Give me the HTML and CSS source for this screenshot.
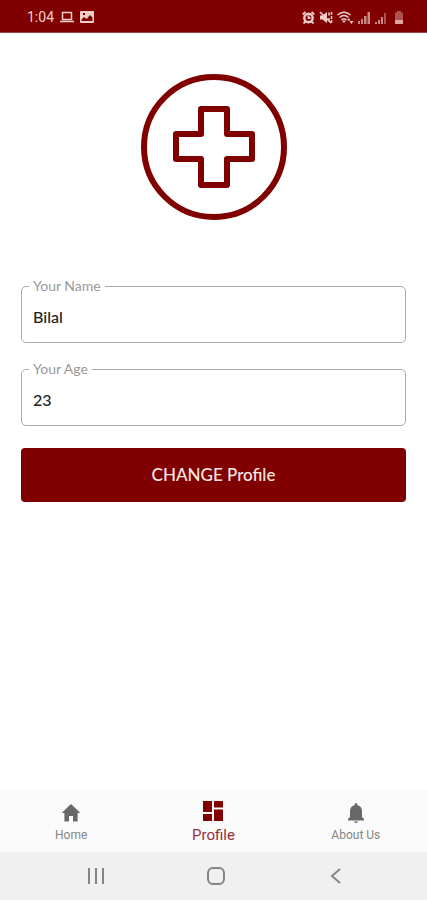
FILE: index.html
```
<!DOCTYPE html>
<html lang="en">
<head>
<meta charset="utf-8">
<meta name="viewport" content="width=device-width, initial-scale=1">
<title>Profile</title>
<link rel="stylesheet" href="styles.css">
</head>
<body>
<header class="status">
  <div class="status-group">
    <span class="clock">1:04</span>
    <svg width="14" height="12" viewBox="0 0 14 12" fill="none" stroke="currentColor"><path d="M2.500 1.500h9v7h-9zM0 10.500h14" stroke-width="1.500"/></svg>
    <svg width="14" height="12" viewBox="0 0 14 12"><path fill="currentColor" fill-rule="evenodd" d="M1 0h12q1 0 1 1v10q0 1-1 1H1q-1 0-1-1V1q0-1 1-1zM1.500 10h11V6.500L10 4 6.500 8 4 6 1.500 8.500zM3 2v2h2V2z"/></svg>
  </div>
  <div class="status-group status-icons">
    <svg width="13" height="13" viewBox="0 0 13 13" fill="none" stroke="currentColor"><circle cx="6.500" cy="7" r="4.200" stroke-width="2.400"/><path d="M6.500 4.500V7h2M.7 3.500 3.500.8M12.300 3.500 9.500.8M1.500 12.500l2-2M11.500 12.500l-2-2" stroke-width="1.800"/></svg>
    <svg width="14" height="13" viewBox="0 0 14 13" fill="none" stroke="currentColor"><path fill="currentColor" stroke="none" d="M1 4.500h2.500L8 1v11L3.500 8.500H1z"/><path d="M1 1l11 11" stroke-width="1.600"/><path d="M10 1.500v3.500M10 7v3M12.500 1v11" stroke-width="1.500" stroke-dasharray="3 1"/></svg>
    <svg width="17" height="13" viewBox="0 0 17 13" fill="none" stroke="currentColor"><path d="M.5 4q6.500-5.500 13 0M2.500 6.500q4.500-4 9 0M4.500 9q2.500-2.500 5 0" stroke-width="1.600"/><path fill="currentColor" stroke="none" d="M5 9.500h4L7 12zM10 9.500l1.800-2.500 1.800 2.500zM12.500 10h4l-2 3z"/></svg>
    <svg class="dim" width="13" height="13" viewBox="0 0 13 13" fill="currentColor"><path d="M0 10h2v3H0zM3 8h2v5H3zM6 5h2.500v8H6zM9.500 1H12v12H9.500z"/></svg>
    <svg class="dim" width="12" height="13" viewBox="0 0 12 13" fill="currentColor"><path d="M0 11h2v2H0zM3 9h2v4H3zM6 6h2v7H6z"/><path opacity=".6" d="M9 2h2v11H9z"/></svg>
    <svg class="battery" width="10" height="13" viewBox="0 0 10 13" fill="currentColor"><path opacity=".5" d="M3 0h4v1.500h2V9H1V1.500h2z"/><path d="M1 9h8v4H1z"/></svg>
  </div>
</header>

<main class="content">
  <svg class="logo" width="146" height="146" viewBox="0 0 146 146" fill="none" stroke="currentColor" stroke-width="6" stroke-linejoin="round" role="img" aria-label="Medical cross"><circle cx="73" cy="73" r="70"/><path d="M60 35h26v25h25v25H86v26H60V85H35V60h25z"/></svg>
  <form class="form">
    <fieldset class="field">
      <legend><label for="name">Your Name</label></legend>
      <input id="name" type="text" value="Bilal">
    </fieldset>
    <fieldset class="field">
      <legend><label for="age">Your Age</label></legend>
      <input id="age" type="text" inputmode="numeric" value="23">
    </fieldset>
    <button class="submit" type="button">CHANGE Profile</button>
  </form>
</main>

<nav class="tabs">
  <a class="tab" href="#home">
    <svg width="20" height="20" viewBox="0 0 20 20" fill="currentColor"><path d="M10 1 .7 10h2.700v8.500H8V13h4v5.500h4.600V10h2.700z"/></svg>
    <span>Home</span>
  </a>
  <a class="tab active" href="#profile" aria-current="page">
    <svg width="20" height="20" viewBox="0 0 20 20" fill="currentColor"><path d="M0 0h9v11H0zM11 0h9v6.500h-9zM0 13h9v7H0zM11 8.500h9V20h-9z"/></svg>
    <span>Profile</span>
  </a>
  <a class="tab" href="#about">
    <svg width="20" height="20" viewBox="0 0 20 20" fill="currentColor"><path d="M8.700 2V1Q10-.8 11.300 1v1Q16 3.500 16 8v6l2 2v1.500H2V16l2-2V8q0-4.500 4.700-6zM8 18.500h4q-.5 1.500-2 1.500t-2-1.500z"/></svg>
    <span>About Us</span>
  </a>
</nav>
<div class="system">
  <button type="button" aria-label="Recent apps"><svg width="18" height="18" viewBox="0 0 18 18" fill="none" stroke="currentColor" stroke-width="2"><path d="M2 1v16M9 1v16M16 1v16"/></svg></button>
  <button type="button" aria-label="Home screen"><svg width="18" height="18" viewBox="0 0 18 18" fill="none" stroke="currentColor" stroke-width="2"><rect x="1" y="1" width="16" height="16" rx="5"/></svg></button>
  <button type="button" aria-label="Back"><svg width="18" height="18" viewBox="0 0 18 18" fill="none" stroke="currentColor" stroke-width="2"><path d="M13 2 5 9l8 7"/></svg></button>
</div>
</body>
</html>
```
FILE: styles.css
```
* { box-sizing: border-box; }

body {
  margin: 0;
  min-height: 100vh;
  display: flex;
  flex-direction: column;
  background: #fff;
  color: #222;
  font-family: Lato, sans-serif;
}

svg { display: block; flex: none; }

.status {
  display: flex;
  justify-content: space-between;
  align-items: center;
  padding: 9px 23px 7px 27px;
  background: #800000;
  color: #f0cfcb;
  border-bottom: 1px solid #a04848;
}

.status-group { display: flex; align-items: center; gap: 6px; }
.status-icons { gap: 4px; }
.clock { font: 14px/16px Roboto, sans-serif; }
.dim { color: #c98a86; }
.battery { margin-left: 3px; color: #dda5a0; }

.content {
  flex: 1;
  display: flex;
  flex-direction: column;
  align-items: center;
  padding: 41px 21px 24px;
}

.logo { color: #800000; }

.form {
  align-self: stretch;
  display: flex;
  flex-direction: column;
  gap: 18px;
  margin-top: 58px;
}

.field {
  min-width: 0;
  margin: 0;
  padding: 0 7px;
  border: 1px solid #aaa;
  border-radius: 5px;
}

.field legend {
  padding: 0 4px;
  color: #999;
  font-size: 14px;
  line-height: 16px;
}

.field input {
  display: block;
  width: 100%;
  height: 48px;
  padding: 0 4px 4px;
  border: 0;
  outline: 0;
  background: transparent;
  color: #222;
  font: 500 16px/24px Lato, sans-serif;
}

.submit {
  height: 54px;
  margin-top: 4px;
  border: 0;
  border-radius: 4px;
  background: #800000;
  color: #f8e8e5;
  font: 500 17px/24px Lato, sans-serif;
}

.tabs {
  display: grid;
  grid-template-columns: repeat(3, 1fr);
  height: 62px;
  background: #fafafa;
}

.tab {
  display: flex;
  flex-direction: column;
  align-items: center;
  padding-top: 13px;
  gap: 4px;
  color: #686868;
  font: 12px/16px Roboto, sans-serif;
  text-decoration: none;
}

.tab span { color: #858585; }
.tab.active { padding-top: 11px; gap: 6px; color: #800000; font-size: 15px; }
.tab.active span { color: #963040; }

.system {
  display: flex;
  justify-content: center;
  gap: 72px;
  padding-left: 4px;
  height: 48px;
  background: #f0f0f0;
}

.system button {
  display: grid;
  place-items: center;
  width: 48px;
  padding: 0;
  border: 0;
  background: none;
  color: #858585;
}
```
